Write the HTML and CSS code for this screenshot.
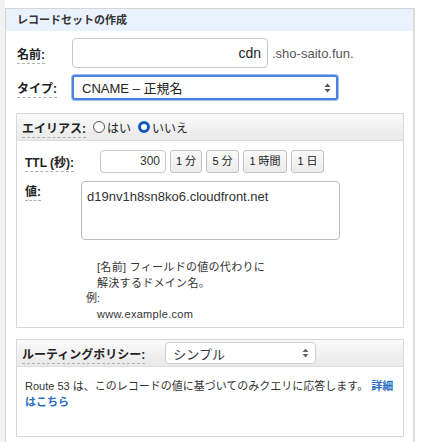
FILE: index.html
```html
<!DOCTYPE html>
<html lang="ja">
<head>
<meta charset="utf-8">
<link rel="stylesheet" href="styles.css">
</head>
<body>
<div class="page">
  <div class="gutter"></div>
  <div class="panel">
    <div class="panel-head">レコードセットの作成</div>
    <div class="row row-name">
      <div class="cell"><span class="label">名前:</span></div>
      <div class="input name-input">cdn</div>
      <span class="suffix">.sho-saito.fun.</span>
    </div>
    <div class="row row-type">
      <div class="cell"><span class="label">タイプ:</span></div>
      <div class="select type-select">
        <span>CNAME – 正規名</span>
        <svg class="arrows" width="7" height="10" viewBox="0 0 7 10"><path d="M3.5 0.5 L6.5 4 H0.5 Z M3.5 9.5 L6.5 6 H0.5 Z" fill="#555"/></svg>
      </div>
    </div>

    <div class="box alias-box">
      <div class="box-head">
        <span class="label">エイリアス:</span>
        <span class="radio"></span><span class="radio-text">はい</span>
        <span class="radio on"></span><span class="radio-text">いいえ</span>
      </div>
      <div class="box-body">
        <div class="ttl-row">
          <div class="ttl-cell"><span class="label">TTL (秒):</span></div>
          <div class="input ttl-input">300</div>
          <div class="btns">
            <span class="btn w32">1 分</span>
            <span class="btn w33">5 分</span>
            <span class="btn w44">1 時間</span>
            <span class="btn w33">1 日</span>
          </div>
        </div>
        <div class="value-row">
          <div class="value-cell"><span class="label">値:</span></div>
          <div class="textarea">d19nv1h8sn8ko6.cloudfront.net</div>
        </div>
        <div class="help">
          <p class="help-line">[名前] フィールドの値の代わりに</p>
          <p class="help-line">解決するドメイン名。</p>
          <p class="help-ex">例:</p>
          <p class="help-line">www.example.com</p>
        </div>
      </div>
    </div>

    <div class="box route-box">
      <div class="box-head">
        <span class="label">ルーティングポリシー:</span>
        <div class="select route-select">
          <span>シンプル</span>
          <svg class="arrows" width="7" height="10" viewBox="0 0 7 10"><path d="M3.5 0.5 L6.5 4 H0.5 Z M3.5 9.5 L6.5 6 H0.5 Z" fill="#666"/></svg>
        </div>
      </div>
      <div class="route-body">Route 53 は、このレコードの値に基づいてのみクエリに応答します。 <a class="link">詳細<br>はこちら</a></div>
    </div>
  </div>
</div>
</body>
</html>
```

FILE: styles.css
```css
* { box-sizing: border-box; }
html, body { margin: 0; padding: 0; background: #fff; }
body {
  font-family: "Liberation Sans", "Noto Sans CJK JP", sans-serif;
  color: #333;
  font-size: 12px;
  overflow: hidden;
}
.page { display: flex; height: 442px; }
.gutter { width: 5px; background: #f2f2f2; }
.panel {
  margin-top: 8px;
  width: 410px;
  border-left: 1px solid #d6d6d6;
  border-top: 1px solid #d6d6d6;
  border-right: 2px solid #dcdcdc;
}
.panel-head {
  height: 22px;
  line-height: 22px;
  background: #eaf2fd;
  padding-left: 11px;
  font-weight: bold;
  font-size: 11px;
  color: #333;
}
.label {
  font-weight: bold;
  font-size: 12px;
  color: #222;
  text-decoration: underline dashed #b0b0b0;
  text-decoration-thickness: 1px;
  text-underline-offset: 4px;
}
.row { display: flex; align-items: center; padding-left: 11px; }
.cell { width: 55px; }
.row-name { margin-top: 7px; }
.input {
  border: 1px solid #c8c8c8;
  border-radius: 4px;
  background: #fff;
  text-align: right;
}
.name-input {
  width: 196px;
  height: 30px;
  line-height: 28px;
  font-size: 14px;
  color: #222;
  padding-right: 6px;
}
.suffix { margin-left: 4px; font-size: 13px; color: #555; }
.row-type { margin-top: 7px; }
.select {
  display: flex;
  align-items: center;
  justify-content: space-between;
  background: #fff;
}
.type-select {
  width: 266px;
  height: 25px;
  border: 2px solid #4b7fe0;
  border-radius: 3px;
  box-shadow: 0 0 0 1px #9fbcf0;
  padding: 0 5px 0 8px;
  font-size: 13px;
  color: #222;
}
.box {
  margin-left: 10px;
  width: 388px;
  border: 1px solid #d8d8d8;
}
.alias-box { margin-top: 13px; }
.box-head {
  height: 27px;
  display: flex;
  align-items: center;
  padding-left: 5px;
  background: linear-gradient(#fafafa, #e9e9e9);
  border-bottom: 1px solid #dedede;
}
.radio {
  width: 12px;
  height: 12px;
  border-radius: 50%;
  border: 1px solid #555;
  background: #fff;
  margin-left: 7px;
  margin-right: 2px;
}
.radio.on {
  border: 3.5px solid #1259c3;
  background: #fff;
  margin-left: 7px;
}
.radio-text { font-size: 12px; color: #222; }
.box-body { padding: 9px 0 0 8px; }
.ttl-row { display: flex; align-items: center; }
.ttl-cell { width: 75px; }
.ttl-input {
  width: 66px;
  height: 23px;
  line-height: 21px;
  font-size: 12px;
  color: #333;
  padding-right: 5px;
}
.btns { display: flex; gap: 4px; margin-left: 4px; }
.btn {
  height: 23px;
  line-height: 21px;
  text-align: center;
  font-size: 11px;
  color: #222;
  border: 1px solid #c2c2c2;
  border-radius: 3px;
  background: linear-gradient(#fafafa, #ececec);
}
.w32 { width: 32px; }
.w33 { width: 33px; }
.w44 { width: 44px; }
.value-row { display: flex; align-items: flex-start; margin-top: 8px; }
.value-cell { width: 56px; margin-top: 1px; }
.textarea {
  width: 259px;
  height: 59px;
  border: 1px solid #bdbdbd;
  border-radius: 4px;
  padding: 7px 5px;
  font-size: 13px;
  color: #333;
}
.help { padding-left: 61px; margin-top: 20px; padding-bottom: 5px; font-size: 11px; color: #333; }
.help p { margin: 0; line-height: 15.5px; }
.help-line { padding-left: 11px; letter-spacing: 0.3px; }
.route-box { margin-top: 11px; }
.route-select {
  margin-left: 20px;
  width: 151px;
  height: 22px;
  border: 1px solid #d0d0d0;
  border-radius: 4px;
  padding: 0 6px 0 7px;
  font-size: 13px;
  color: #333;
}
.route-body {
  padding: 11px 0 26px 8px;
  font-size: 11px;
  line-height: 16px;
  color: #333;
  white-space: nowrap;
}
.link { color: #2a6fbf; font-weight: bold; }
```
